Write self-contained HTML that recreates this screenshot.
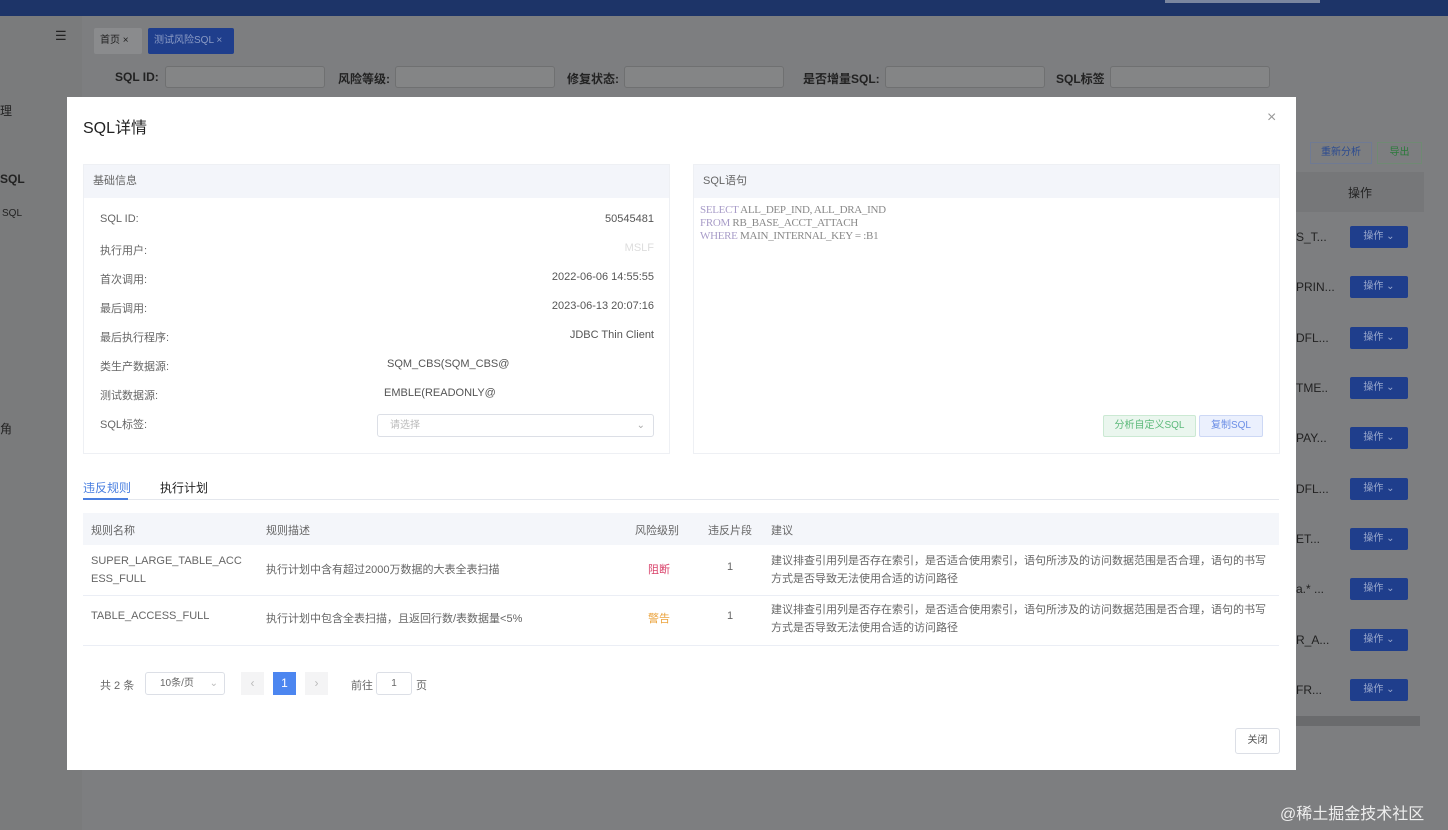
<!DOCTYPE html>
<html><head><meta charset="utf-8"><style>
*{box-sizing:border-box;margin:0;padding:0}
body{width:1448px;height:830px;overflow:hidden;background:#7d7e80;font-family:"Liberation Sans","Noto Sans CJK SC",sans-serif;position:relative;font-size:12px;color:#333}
.a{position:absolute}
.top{left:0;top:0;width:1448px;height:16px;background:#1d3468}
.side{left:0;top:16px;width:82px;height:814px;background:#7a7b7c}
.bgtxt{color:#222;font-size:12px}
.bgin{background:#848586;border:1px solid #6f7071;border-radius:3px;height:22px}
.opbtn{width:58px;height:22px;background:#1f3e8c;color:#9aa8cc;font-size:10px;line-height:22px;text-align:center;border-radius:2px}
.modal{left:67px;top:97px;width:1229px;height:673px;background:#fff}
.box{border:1px solid #eef0f4}
.boxh{height:33px;background:#f3f5fa;font-size:11px;color:#666;line-height:33px;padding-left:9px}
.lab{left:32px;color:#666;font-size:11px}
.val{right:15px;color:#555;font-size:11px;text-align:right}
.th{background:#f4f6fa;height:32px;top:0}
.tc{color:#666;font-size:11px}
</style></head><body>
<div class="a top"></div>
<div class="a" style="left:1165px;top:0;width:155px;height:3px;background:#7a869f"></div>
<div class="a side"></div>
<div class="a" style="left:55px;top:28px;color:#222;font-size:13px">☰</div>
<div class="a bgtxt" style="left:0;top:102px">理</div>
<div class="a bgtxt" style="left:0;top:172px;font-weight:bold">SQL</div>
<div class="a bgtxt" style="left:2px;top:208px;font-size:10px">SQL</div>
<div class="a bgtxt" style="left:0;top:420px">角</div>
<div class="a" style="left:94px;top:28px;width:48px;height:26px;background:#8a8b8d;border-radius:2px;font-size:10px;line-height:26px;padding-left:6px;color:#222">首页 ×</div>
<div class="a" style="left:148px;top:28px;width:86px;height:26px;background:#1f3e8c;border-radius:2px;font-size:10px;line-height:26px;padding-left:6px;color:#8b9bc4">测试风险SQL ×</div>
<div class="a bgtxt" style="left:115px;top:70px;font-weight:bold">SQL ID:</div>
<div class="a bgin" style="left:165px;top:66px;width:160px"></div>
<div class="a bgtxt" style="left:338px;top:70px;font-weight:bold">风险等级:</div>
<div class="a bgin" style="left:395px;top:66px;width:160px"></div>
<div class="a bgtxt" style="left:567px;top:70px;font-weight:bold">修复状态:</div>
<div class="a bgin" style="left:624px;top:66px;width:160px"></div>
<div class="a bgtxt" style="left:803px;top:70px;font-weight:bold">是否增量SQL:</div>
<div class="a bgin" style="left:885px;top:66px;width:160px"></div>
<div class="a bgtxt" style="left:1056px;top:70px;font-weight:bold">SQL标签</div>
<div class="a bgin" style="left:1110px;top:66px;width:160px"></div>
<div class="a" style="left:1310px;top:142px;width:62px;height:22px;border:1px solid #6f7a93;color:#2a4a90;font-size:10px;line-height:20px;text-align:center">重新分析</div>
<div class="a" style="left:1377px;top:142px;width:45px;height:22px;border:1px solid #6f8a73;color:#2a7a3a;font-size:10px;line-height:20px;text-align:center">导出</div>
<div class="a" style="left:1296px;top:172px;width:128px;height:40px;background:#767779"></div>
<div class="a bgtxt" style="left:1348px;top:184px">操作</div>
<div class="a bgtxt" style="left:1296px;top:230px">S_T...</div><div class="a opbtn" style="left:1350px;top:226px">操作 ⌄</div>
<div class="a bgtxt" style="left:1296px;top:280px">PRIN...</div><div class="a opbtn" style="left:1350px;top:276px">操作 ⌄</div>
<div class="a bgtxt" style="left:1296px;top:331px">DFL...</div><div class="a opbtn" style="left:1350px;top:327px">操作 ⌄</div>
<div class="a bgtxt" style="left:1296px;top:381px">TME..</div><div class="a opbtn" style="left:1350px;top:377px">操作 ⌄</div>
<div class="a bgtxt" style="left:1296px;top:431px">PAY...</div><div class="a opbtn" style="left:1350px;top:427px">操作 ⌄</div>
<div class="a bgtxt" style="left:1296px;top:482px">DFL...</div><div class="a opbtn" style="left:1350px;top:478px">操作 ⌄</div>
<div class="a bgtxt" style="left:1296px;top:532px">ET...</div><div class="a opbtn" style="left:1350px;top:528px">操作 ⌄</div>
<div class="a bgtxt" style="left:1296px;top:582px">a.* ...</div><div class="a opbtn" style="left:1350px;top:578px">操作 ⌄</div>
<div class="a bgtxt" style="left:1296px;top:633px">R_A...</div><div class="a opbtn" style="left:1350px;top:629px">操作 ⌄</div>
<div class="a bgtxt" style="left:1296px;top:683px">FR...</div><div class="a opbtn" style="left:1350px;top:679px">操作 ⌄</div>
<div class="a" style="left:1296px;top:716px;width:124px;height:10px;background:#6a6b6d"></div>
<div class="a" style="left:1280px;top:800px;color:#eee;font-size:16px">@稀土掘金技术社区</div>

<div class="a modal">
  <div class="a" style="left:16px;top:17px;font-size:16px;color:#222">SQL详情</div>
  <div class="a" style="left:1200px;top:12px;font-size:16px;color:#999">×</div>
  <div class="a box" style="left:16px;top:67px;width:587px;height:290px">
    <div class="boxh">基础信息</div>
    <div class="a lab" style="left:16px;top:48px">SQL ID:</div><div class="a val" style="top:48px">50545481</div>
    <div class="a lab" style="left:16px;top:77px">执行用户:</div><div class="a val" style="top:77px;color:#ddd">MSLF</div>
    <div class="a lab" style="left:16px;top:106px">首次调用:</div><div class="a val" style="top:106px">2022-06-06 14:55:55</div>
    <div class="a lab" style="left:16px;top:135px">最后调用:</div><div class="a val" style="top:135px">2023-06-13 20:07:16</div>
    <div class="a lab" style="left:16px;top:164px">最后执行程序:</div><div class="a val" style="top:164px">JDBC Thin Client</div>
    <div class="a lab" style="left:16px;top:193px">类生产数据源:</div><div class="a" style="left:303px;top:193px;color:#555;font-size:11px">SQM_CBS(SQM_CBS@</div>
    <div class="a lab" style="left:16px;top:222px">测试数据源:</div><div class="a" style="left:300px;top:222px;color:#555;font-size:11px">EMBLE(READONLY@</div>
    <div class="a lab" style="left:16px;top:251px">SQL标签:</div>
    <div class="a" style="left:293px;top:249px;width:277px;height:23px;border:1px solid #dcdfe6;border-radius:3px;color:#bbb;font-size:10px;line-height:21px;padding-left:12px">请选择<span style="float:right;margin-right:8px;color:#aaa">⌄</span></div>
  </div>
  <div class="a box" style="left:626px;top:67px;width:587px;height:290px">
    <div class="boxh">SQL语句</div>
    <div style="font-family:'Liberation Serif',serif;font-size:11px;line-height:13px;color:#888;padding:6px 6px;letter-spacing:-0.3px">
      <span style="color:#a89cc8">SELECT</span> ALL_DEP_IND, ALL_DRA_IND<br><span style="color:#a89cc8">FROM</span> RB_BASE_ACCT_ATTACH<br><span style="color:#a89cc8">WHERE</span> MAIN_INTERNAL_KEY = :B1</div>
    <div class="a" style="left:409px;top:250px;width:93px;height:22px;background:#eaf6ee;border:1px solid #cbe9d3;color:#5cb97a;font-size:10px;line-height:20px;text-align:center;border-radius:2px">分析自定义SQL</div>
    <div class="a" style="left:505px;top:250px;width:64px;height:22px;background:#ebf0fd;border:1px solid #cdd8f5;color:#6b8ee6;font-size:10px;line-height:20px;text-align:center;border-radius:2px">复制SQL</div>
  </div>
  <div class="a" style="left:16px;top:382px;color:#4a7fe0;font-size:12px">违反规则</div>
  <div class="a" style="left:93px;top:382px;color:#222;font-size:12px">执行计划</div>
  <div class="a" style="left:16px;top:402px;width:1196px;height:1px;background:#e4e7ed"></div>
  <div class="a" style="left:16px;top:401px;width:45px;height:2px;background:#4a7fe0"></div>
  <div class="a" style="left:16px;top:416px;width:1196px;height:133px">
    <div class="a th" style="left:0;width:1196px;height:32px"></div>
    <div class="a tc" style="left:8px;top:9px">规则名称</div>
    <div class="a tc" style="left:183px;top:9px">规则描述</div>
    <div class="a tc" style="left:552px;top:9px">风险级别</div>
    <div class="a tc" style="left:625px;top:9px">违反片段</div>
    <div class="a tc" style="left:688px;top:9px">建议</div>
    <div class="a tc" style="left:8px;top:39px;line-height:18px;width:160px">SUPER_LARGE_TABLE_ACC ESS_FULL</div>
    <div class="a tc" style="left:183px;top:48px">执行计划中含有超过2000万数据的大表全表扫描</div>
    <div class="a" style="left:565px;top:48px;color:#d9426a;font-size:11px">阻断</div>
    <div class="a tc" style="left:644px;top:48px">1</div>
    <div class="a tc" style="left:688px;top:39px;line-height:18px;width:500px">建议排查引用列是否存在索引，是否适合使用索引，语句所涉及的访问数据范围是否合理，语句的书写方式是否导致无法使用合适的访问路径</div>
    <div class="a" style="left:0;top:82px;width:1196px;height:1px;background:#ebeef5"></div>
    <div class="a tc" style="left:8px;top:97px">TABLE_ACCESS_FULL</div>
    <div class="a tc" style="left:183px;top:97px">执行计划中包含全表扫描，且返回行数/表数据量&lt;5%</div>
    <div class="a" style="left:565px;top:97px;color:#eba33c;font-size:11px">警告</div>
    <div class="a tc" style="left:644px;top:97px">1</div>
    <div class="a tc" style="left:688px;top:88px;line-height:18px;width:500px">建议排查引用列是否存在索引，是否适合使用索引，语句所涉及的访问数据范围是否合理，语句的书写方式是否导致无法使用合适的访问路径</div>
    <div class="a" style="left:0;top:132px;width:1196px;height:1px;background:#ebeef5"></div>
  </div>
  <div class="a tc" style="left:33px;top:580px">共 2 条</div>
  <div class="a" style="left:78px;top:575px;width:80px;height:23px;border:1px solid #dcdfe6;border-radius:3px;font-size:10px;color:#666;line-height:21px;padding-left:14px">10条/页 <span style="float:right;margin-right:6px;color:#bbb">⌄</span></div>
  <div class="a" style="left:174px;top:575px;width:23px;height:23px;background:#f4f4f5;color:#bbb;text-align:center;line-height:23px">‹</div>
  <div class="a" style="left:206px;top:575px;width:23px;height:23px;background:#4c86f0;color:#fff;text-align:center;line-height:23px">1</div>
  <div class="a" style="left:238px;top:575px;width:23px;height:23px;background:#f4f4f5;color:#bbb;text-align:center;line-height:23px">›</div>
  <div class="a tc" style="left:284px;top:580px">前往</div>
  <div class="a" style="left:309px;top:575px;width:36px;height:23px;border:1px solid #dcdfe6;border-radius:3px;text-align:center;line-height:21px;font-size:10px;color:#666">1</div>
  <div class="a tc" style="left:349px;top:580px">页</div>
  <div class="a" style="left:1168px;top:631px;width:45px;height:26px;border:1px solid #dcdfe6;border-radius:3px;font-size:10px;color:#555;text-align:center;line-height:24px">关闭</div>
</div>
</body></html>
